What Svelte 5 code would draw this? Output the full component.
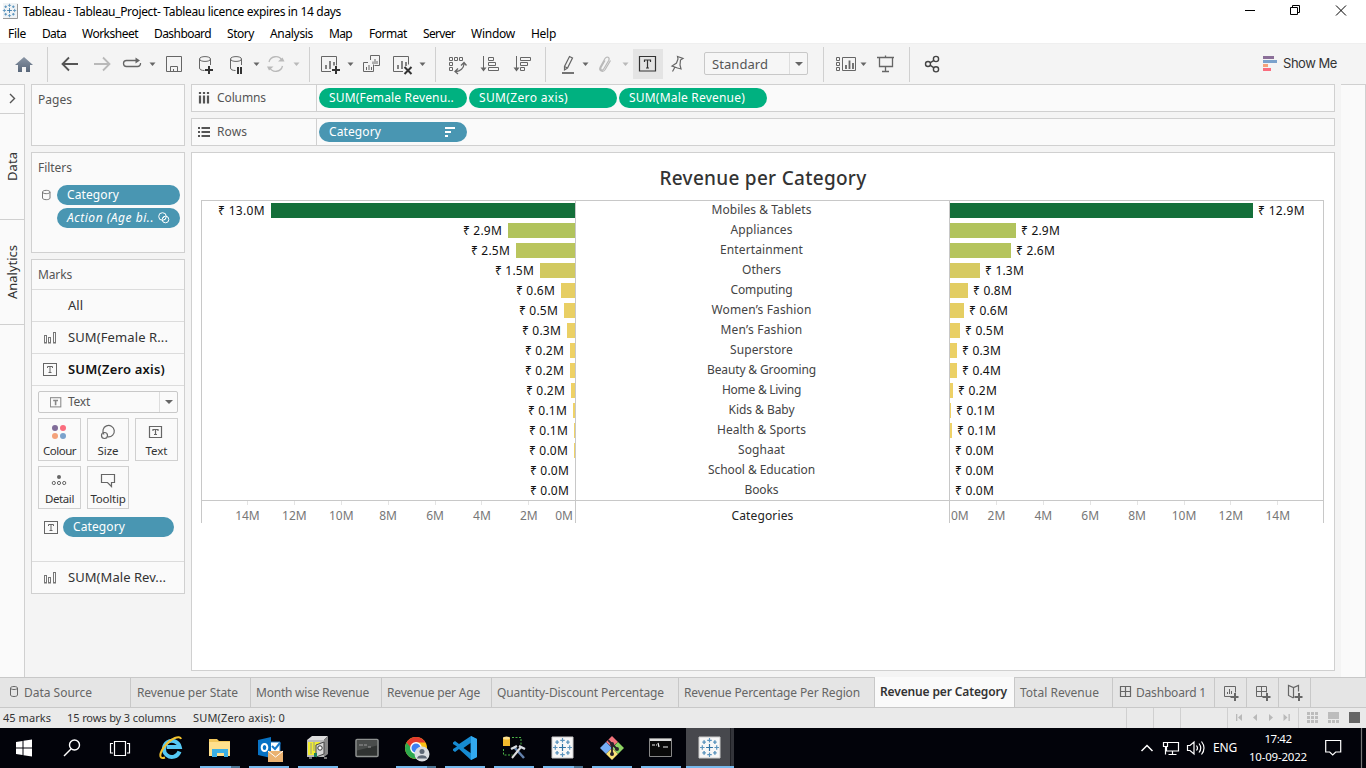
<script>
  // Spreads or tightens letter spacing so a label takes the given length.
  function fit(node, length) {
    if (!length) return;
    const box = node.getBoundingClientRect();
    const natural = Math.max(box.width, box.height > 20 && node.closest('.side') ? box.height : 0);
    const spacing = (length - natural) / node.textContent.length;
    node.style.letterSpacing = spacing.toFixed(3) + 'px';
  }

  const menus = [
    ['File', 18], ['Data', 24], ['Worksheet', 56], ['Dashboard', 57], ['Story', 27],
    ['Analysis', 43], ['Map', 23], ['Format', 38], ['Server', 32], ['Window', 44], ['Help', 25]
  ];
  const menuGaps = [0, 16, 16, 16, 16, 16, 16, 17, 16, 16, 16];

  const rows = [
    ['Mobiles & Tablets', 304, '₹ 13.0M', 303, '₹ 12.9M', '#146f3a', '#146f3a', 100],
    ['Appliances', 67, '₹ 2.9M', 66, '₹ 2.9M', '#b1c35c', '#b1c35c', 62],
    ['Entertainment', 59, '₹ 2.5M', 61, '₹ 2.6M', '#bac55d', '#b5c45d', 83],
    ['Others', 35, '₹ 1.5M', 30, '₹ 1.3M', '#d1c960', '#d6ca61', 39],
    ['Computing', 14, '₹ 0.6M', 18, '₹ 0.8M', '#e6ce63', '#e2cd62', 62],
    ['Women’s Fashion', 11, '₹ 0.5M', 14, '₹ 0.6M', '#e9cf64', '#e5ce63', 100],
    ['Men’s Fashion', 8, '₹ 0.3M', 10, '₹ 0.5M', '#ebd065', '#e9cf64', 82],
    ['Superstore', 5, '₹ 0.2M', 7, '₹ 0.3M', '#eed166', '#ebd065', 63],
    ['Beauty & Grooming', 5, '₹ 0.2M', 7, '₹ 0.4M', '#eed166', '#ebd065', 109],
    ['Home & Living', 4, '₹ 0.2M', 3, '₹ 0.2M', '#eed166', '#eed166', 79],
    ['Kids & Baby', 2, '₹ 0.1M', 1, '₹ 0.1M', '#efd267', '#efd267', 66],
    ['Health & Sports', 1, '₹ 0.1M', 2, '₹ 0.1M', '#efd267', '#efd267', 89],
    ['Soghaat', 1, '₹ 0.0M', 0, '₹ 0.0M', '#efd267', '#efd267', 47],
    ['School & Education', 0, '₹ 0.0M', 0, '₹ 0.0M', '#efd267', '#efd267', 107],
    ['Books', 0, '₹ 0.0M', 0, '₹ 0.0M', '#efd267', '#efd267', 34]
  ];
  const ticks = [14, 12, 10, 8, 6, 4, 2];

  const tabs = [
    ['Revenue per State', 120, 101], ['Month wise Revenue', 131, 113], ['Revenue per Age', 110, 93],
    ['Quantity-Discount Percentage', 187, 167], ['Revenue Percentage Per Region', 196, 176],
    ['Revenue per Category', 140, 127], ['Total Revenue', 98, 79]
  ];
</script>

{#snippet caret(x, y = 64, c = '#666')}
  <path d="M{x - 3} {y - 1.5}h6l-3 3.5z" fill={c} stroke="none" />
{/snippet}

{#snippet plus(x, y)}
  <path d="M{x - 4} {y}h8M{x} {y - 4}v8" stroke="#333" stroke-width="2" />
{/snippet}

{#snippet cylinder(x, y)}
  <path d="M{x} {y + 2.5}v9c0 1.6 2 2.5 5 2.5M{x + 11} {y + 2.5}v6M{x} {y + 2.5}c0-3.2 11-3.2 11 0s-11 3.2-11 0" />
{/snippet}

{#snippet tableau(x, y, s)}
  <g transform="translate({x} {y}) scale({s})" fill="none" stroke-width="1.3">
    <path d="M-3.8 0h7.6M0-3.8v7.6" stroke="#2f73a4" />
    <path d="M0-10.5v5M-2.5-8h5M0 10.5v-5M-2.5 8h5M-10.5 0h5M-8-2.5v5M10.5 0h-5M8-2.5v5" stroke="#5b94bd" />
    <path d="M-6-8v4M-8-6h4M6-8v4M4-6h4M-6 8v-4M-8 6h4M6 8v-4M4 6h4" stroke="#5b94bd" stroke-width="1.6" />
  </g>
{/snippet}

{#snippet textMark(c = '#666')}
  <svg width="15" height="13" viewBox="0 0 15 13" fill="none" stroke={c}>
    <rect x=".5" y=".5" width="13" height="12" />
    <path d="M4.5 5V3.5h5V5M7 3.5v6M5.5 9.5h3" />
  </svg>
{/snippet}

{#snippet barsMark()}
  <svg width="15" height="13" viewBox="0 0 15 13" fill="none" stroke="#777">
    <rect x="1.5" y="4.5" width="2" height="7.5" /><rect x="5.5" y="6.5" width="2" height="5.5" /><rect x="10.5" y="1.5" width="2" height="10.5" />
  </svg>
{/snippet}

<div class="window">
  <header class="titlebar">
    <svg width="20" height="24" viewBox="0 0 20 24"><path d="M3 3h15v15.5H3z" fill="#f0f3f5" /><path d="M17.5 4v14.5H3" fill="none" stroke="#999" />{@render tableau(9.5, 10.5, .64)}</svg>
    <span class="t" use:fit={318}>Tableau - Tableau_Project- Tableau licence expires in 14 days</span>
    <svg class="controls" width="131" height="24" viewBox="1235 0 131 24" fill="none" stroke="#000">
      <path d="M1245 10.5h10M1290.5 7.5h7v7h-7zM1292.5 7.5v-2h7v7h-2M1336 5.5l10 10M1346 5.5l-10 10" />
    </svg>
  </header>

  <nav class="menu">
    {#each menus as [label, w], i}
      <span style="margin-left:{menuGaps[i]}px;width:{w}px"><i class="t" use:fit={w}>{label}</i></span>
    {/each}
  </nav>

  <div class="toolbar">
    <svg width="47" viewBox="0 43 47 41">
      <defs><linearGradient id="roof" x2="0" y2="1"><stop stop-color="#8995a5" /><stop offset="1" stop-color="#59677a" /></linearGradient></defs>
      <path d="M24 57l9 8h-3v7h-4v-5h-4v5h-4v-7h-3z" fill="url(#roof)" stroke="none" />
    </svg>
    <b></b>
    <svg width="36" viewBox="48 43 36 41"><path d="M62.500 64h15.500M69 57.500l-6.500 6.500 6.500 6.500" stroke-width="1.800" stroke="#555" /></svg>
    <svg width="32" viewBox="84 43 32 41"><path d="M94 64h15.500M103 57.500l6.500 6.500-6.500 6.500" stroke-width="1.800" stroke="#b9b9b9" /></svg>
    <svg width="42" viewBox="116 43 42 41"><path d="M137.500 60.500h-11a3 3 0 0 0 0 6h11a3 3 0 0 0 3-3.500" stroke-width="1.300" /><path d="M135.500 57.500l4.500 3-4.500 3z" fill="#666" stroke="none" />{@render caret(152.500)}</svg>
    <svg width="30" viewBox="158 43 30 41"><path d="M166.500 56.500h15v15h-15zM170.500 71v-4.500h7v4.500M173.500 69v2" /></svg>
    <svg width="34" viewBox="188 43 34 41">{@render cylinder(199.500, 56.500)}{@render plus(209, 70)}</svg>
    <svg width="42" viewBox="222 43 42 41">{@render cylinder(230.500, 56.500)}<path d="M238 67v7M241 67v7" stroke="#333" stroke-width="2" />{@render caret(256.500)}</svg>
    <svg width="45" viewBox="264 43 45 41"><g stroke="#b9b9b9"><path d="M269 62a7 7 0 0 1 13-1.500M282.500 66a7 7 0 0 1-13 1.500" stroke-width="1.300" /><path d="M278 61.500h6.500l-2-4zM267 66.500h6.500l-4.500 4z" fill="#b9b9b9" stroke="none" /></g>{@render caret(296.500, 64, '#b9b9b9')}</svg>
    <b></b>
    <svg width="46" viewBox="310 43 46 41"><path d="M331 71.500h-9.500v-15h15v9" /><path d="M326 69v-4M330 69v-8M334 65.500v-3.500" stroke-width="1.600" />{@render plus(336, 70)}{@render caret(350.500)}</svg>
    <svg width="31" viewBox="356 43 31 41"><path d="M370.500 60v-4.500h9v10h-5M368 62.500h-4.500v9h10v-7M366.500 70v-3M369 70v-5M371.500 70v-3M373 64v-2.500M375 64v-5M377 64v-3" /></svg>
    <svg width="48" viewBox="387 43 48 41"><path d="M403 71.500h-9.500v-15h15v8" /><path d="M398 69v-4M402 69v-8M406 66v-4" stroke-width="1.600" /><path d="M404.500 67l7 7M411.500 67l-7 7" stroke="#333" stroke-width="2" />{@render caret(422.500)}</svg>
    <b></b>
    <svg width="36" viewBox="436 43 36 41"><path d="M449.500 57.500h3v3h-3zM454.500 57.500h3v3h-3zM459.500 57.500h3v3h-3zM449.500 62.500h3v3h-3zM449.500 67.500h3v3h-3z" /><path d="M464 64a8 8 0 0 1-8 7.500M458 68.500l-3 3 3 2.500M461 65.500l3-3 2.500 3" stroke-width="1.300" /></svg>
    <svg width="32" viewBox="472 43 32 41"><path d="M483.500 56v14M488.500 57.500h5v3h-5zM488.500 62.500h7v3h-7zM488.500 67.500h10v3h-10z" /><path d="M480.500 67.500h6l-3 4z" fill="#666" stroke="none" /></svg>
    <svg width="41" viewBox="504 43 41 41"><path d="M516.500 56v14M520.500 57.500h10v3h-10zM520.500 62.500h7v3h-7zM520.500 67.500h4v3h-4z" /><path d="M513.500 67.500h6l-3 4z" fill="#666" stroke="none" /></svg>
    <b></b>
    <svg width="46" viewBox="546 43 46 41"><path d="M562 73h12" stroke-width="1.800" /><path d="M564.500 70v-3.500l5-10 3 1.500-5 10zM564.500 66.500l3 1.500" stroke-width="1.200" />{@render caret(585.500)}</svg>
    <svg width="41" viewBox="592 43 41 41"><path d="M605 60.500l-4 7c-1 2.500 1.500 3.500 2.700 1.500l5-8.500c1.500-3-1.800-4.800-3.700-2l-4.800 8.500c-1.800 3.800 2.800 6 5 2.500l5.300-9" stroke="#b9b9b9" stroke-width="1.200" />{@render caret(625.500, 64, '#b9b9b9')}</svg>
    <svg width="30" viewBox="633 43 30 41"><path d="M633 49h30v30h-30z" fill="#e4e4e4" stroke="none" /><path d="M639.500 56.500h16v14.500h-16zM644.500 62v-2h6v2M647.500 60v8M646 68h3" stroke="#333" stroke-width="1.200" /></svg>
    <svg width="41" viewBox="663 43 41 41"><path d="M677.500 56.500l5.500 2-2.500 1.500-.5 5 1 4-3.500-1-5.500-2 4.500-3 1.500-4zM675 67l-2.500 4.500" stroke-width="1.200" /></svg>
    <div class="select big"><span><i class="t" use:fit={56}>Standard</i></span><em></em></div>
    <div class="pad"></div>
    <b></b>
    <svg width="47" viewBox="824 43 47 41"><path d="M836.500 57.500h3v3h-3zM836.500 62.500h3v3h-3zM836.500 67.500h3v3h-3zM842.500 57.500h13v13h-13z" /><path d="M846 69v-4M849.500 69v-8.500M853 69v-6" stroke-width="1.800" />{@render caret(863.500)}</svg>
    <svg width="38" viewBox="871 43 38 41"><path d="M877 57.500h17M879.500 58v8.500h13V58M885.500 55.500v2M885.500 67v4M882 71.500h7" stroke-width="1.300" /></svg>
    <b></b>
    <svg width="40" viewBox="910 43 40 41"><g stroke="#444" stroke-width="1.400"><circle cx="928" cy="64" r="2.500" /><circle cx="936" cy="59" r="2.600" /><circle cx="936" cy="69.300" r="2.600" /><path d="M930 62.800l4-2.400M930 65.200l4 2.600" /></g></svg>
    <div class="showme">
      <svg width="20" height="41" viewBox="1263 43 20 41" stroke="none"><path d="M1263 56h11v3h-11z" fill="#8b6f98" /><path d="M1263 60h14v3h-14z" fill="#7ba2cc" /><path d="M1263 64h5v3h-5z" fill="#f4a27a" /><path d="M1263 68h8v3h-8z" fill="#fa6d7e" /></svg>
      <i class="t" use:fit={54}>Show Me</i>
    </div>
  </div>

  <main>
    <aside class="rail">
      <div class="chev"><svg width="24" height="28" viewBox="0 0 24 28" fill="none" stroke="#555" stroke-width="1.400"><path d="M10 9l4.500 4.500L10 18" /></svg></div>
      <div class="side"><span class="t" use:fit={29}>Data</span></div>
      <div class="side ana"><span class="t" use:fit={54}>Analytics</span></div>
    </aside>

    <section class="cards">
      <div class="card pages"><h3><i class="t" use:fit={34}>Pages</i></h3></div>
      <div class="card filters">
        <h3><i class="t" use:fit={34}>Filters</i></h3>
        <div class="filter">
          <svg width="25" height="20" viewBox="0 0 25 20" fill="none" stroke="#777"><path d="M10.500 7v6c0 2.200 7.500 2.200 7.500 0V7c0-2.200-7.500-2.200-7.500 0s7.500 2.200 7.500 0" /></svg>
          <div class="pill dim"><i class="t" use:fit={52}>Category</i></div>
        </div>
        <div class="filter">
          <svg width="25" height="20"></svg>
          <div class="pill dim"><em class="t" use:fit={87}>Action (Age bi..</em>
            <svg width="14" height="14" viewBox="0 0 14 14" fill="none" stroke="#fff"><circle cx="5.500" cy="5.500" r="3.800" /><circle cx="8.500" cy="8.500" r="3.300" /><path d="M5 8l3-3M7 9l2-2" /></svg>
          </div>
        </div>
      </div>

      <div class="card marks">
        <h3><i class="t" use:fit={34}>Marks</i></h3>
        <div class="mark"><span></span><i class="t" use:fit={15}>All</i></div>
        <div class="mark"><span>{@render barsMark()}</span><i class="t" use:fit={100}>SUM(Female R...</i></div>
        <div class="mark on"><span>{@render textMark()}</span><i class="t" use:fit={97}>SUM(Zero axis)</i></div>
        <div class="editor">
          <div class="select small"><span><svg width="12" height="11" viewBox="0 0 15 13" fill="none" stroke="#888"><rect x=".5" y=".5" width="13" height="11.500" stroke-width="1.300" /><path d="M4 4h6M7 4v6" stroke-width="2" /></svg><i class="t" use:fit={22}>Text</i></span><em></em></div>
          <div class="shelf">
            <div class="btn"><svg width="42" height="24" viewBox="39 419 42 24"><circle cx="55" cy="428" r="3" fill="#806c99" /><circle cx="63" cy="428" r="3" fill="#fa6d7e" /><circle cx="55" cy="436" r="3" fill="#f4a27a" /><circle cx="63" cy="436" r="3" fill="#7ba2cc" /></svg><i class="t" use:fit={33}>Colour</i></div>
            <div class="btn"><svg width="40" height="24" viewBox="88 419 40 24" fill="none" stroke="#666" stroke-width="1.200"><path d="M104 434.500a5.700 5.700 0 1 1 4 2.300" /><circle cx="104.500" cy="435.500" r="3" /></svg><i class="t" use:fit={21}>Size</i></div>
            <div class="btn"><svg width="42" height="24" viewBox="136 419 42 24" fill="none" stroke="#666"><path d="M149.500 426.500h12v11h-12zM153 431v-1.500h5v1.500M155.500 429.500v5M154 434.500h3" stroke-width="1.200" /></svg><i class="t" use:fit={22}>Text</i></div>
            <div class="btn"><svg width="42" height="24" viewBox="39 467 42 24" fill="none" stroke="#666"><circle cx="59" cy="477" r="2" fill="#666" stroke="none" /><circle cx="53.800" cy="483" r="1.600" /><circle cx="59" cy="483" r="1.600" /><circle cx="64.200" cy="483" r="1.600" /></svg><i class="t" use:fit={29}>Detail</i></div>
            <div class="btn"><svg width="40" height="24" viewBox="88 467 40 24" fill="none" stroke="#666" stroke-width="1.200"><path d="M101.500 474.500h13v8h-3v4l-4-4h-6v-8z" /></svg><i class="t" use:fit={35}>Tooltip</i></div>
          </div>
          <div class="encoded">{@render textMark()}<div class="pill dim"><i class="t" use:fit={52}>Category</i></div></div>
        </div>
        <div class="mark last"><span>{@render barsMark()}</span><i class="t" use:fit={98}>SUM(Male Rev...</i></div>
      </div>
    </section>

    <section class="sheet">
      <div class="track">
        <div class="name"><svg width="25" height="24" viewBox="0 0 25 24" fill="none" stroke="#555" stroke-width="2.200"><path d="M8 6v2M8 9.500v8M12 6v2M12 9.500v8M16 6v2M16 9.500v8" /></svg><i class="t" use:fit={49}>Columns</i></div>
        <div class="pill mea"><i class="t" use:fit={125}>SUM(Female Revenu..</i></div>
        <div class="pill mea"><i class="t" use:fit={89}>SUM(Zero axis)</i></div>
        <div class="pill mea"><i class="t" use:fit={116}>SUM(Male Revenue)</i></div>
      </div>
      <div class="track">
        <div class="name"><svg width="25" height="24" viewBox="0 0 25 24" fill="none" stroke="#555" stroke-width="2"><path d="M6 8h2M9.500 8h8.500M6 12h2M9.500 12h8.500M6 16h2M9.500 16h8.500" /></svg><i class="t" use:fit={30}>Rows</i></div>
        <div class="pill dim wide"><i class="t" use:fit={52}>Category</i><svg width="12" height="12" viewBox="0 0 12 12" stroke="#fff" stroke-width="1.800"><path d="M1 2h10M1 6h6M1 10h3" /></svg></div>
      </div>

      <article class="view">
        <h1><span class="t" use:fit={207}>Revenue per Category</span></h1>
        <div class="chart">
          <div class="col left">
            {#each rows as r}
              <div class="row"><span class="label t" use:fit={r[2].length > 6 ? 47 : 39}>{r[2]}</span><div class="bar" style="width:{r[1]}px;background:{r[5]}"></div></div>
            {/each}
          </div>
          <div class="col mid">
            {#each rows as r}<div class="row"><span class="t" use:fit={r[7]}>{r[0]}</span></div>{/each}
          </div>
          <div class="col right">
            {#each rows as r}
              <div class="row"><div class="bar" style="width:{r[3]}px;background:{r[6]}"></div><span class="label t" use:fit={r[4].length > 6 ? 47 : 39}>{r[4]}</span></div>
            {/each}
          </div>
        </div>
        <div class="axes">
          <div class="axis l">{#each ticks as t}<span class="tick">{t}M</span>{/each}<span class="zero">0M</span></div>
          <div class="axis m"><span class="t" use:fit={62}>Categories</span></div>
          <div class="axis r"><span class="zero">0M</span>{#each [...ticks].reverse() as t}<span class="tick">{t}M</span>{/each}</div>
        </div>
      </article>
    </section>
    <aside class="dock"></aside>
  </main>

  <div class="tabs">
    <div class="tab" style="width:131px"><svg width="24" height="29" viewBox="0 0 24 29" fill="none" stroke="#666"><path d="M10.500 10v7c0 2 7 2 7 0v-7c0-2-7-2-7 0s7 2 7 0" /></svg><i class="t" use:fit={68}>Data Source</i></div>
    {#each tabs as [label, w, tw], i}
      <div class="tab sheettab" class:first={i === 0} class:active={label === 'Revenue per Category'} style="width:{w}px"><i class="t" use:fit={tw}>{label}</i></div>
    {/each}
    <div class="tab" style="width:102px"><svg width="23" height="29" viewBox="1113 678 23 29" fill="none" stroke="#666" stroke-width="1.200"><path d="M1120.500 686.500h10v10h-10zM1125.500 686.500v10M1120.500 691.500h10" /></svg><i class="t" use:fit={70}>Dashboard 1</i></div>
    <div class="tab" style="width:32px"><svg width="31" height="29" viewBox="1215 678 31 29" fill="none" stroke="#666"><path d="M1231 696.500h-6.500v-10h11v6M1227.500 694v-2M1229.500 694v-5M1231.500 694v-3" /><path d="M1230.500 697h8M1235 693v8" stroke-width="2" /></svg></div>
    <div class="tab" style="width:32px"><svg width="31" height="29" viewBox="1247 678 31 29" fill="none" stroke="#666"><path d="M1264 696.500h-7.500v-10h10v6M1261.500 686.500v10M1256.500 691.500h10" /><path d="M1262.500 697h8M1267 693v8" stroke-width="2" /></svg></div>
    <div class="tab" style="width:32px"><svg width="31" height="29" viewBox="1279 678 31 29" fill="none" stroke="#666"><path d="M1293.500 698l-5-2.500v-10l5 2 5-2v6M1293.500 688v10" stroke-width="1.200" /><path d="M1294.500 697h8M1299 693v8" stroke-width="2" /></svg></div>
  </div>

  <div class="status">
    <span class="t" use:fit={48}>45 marks</span><span class="t two" use:fit={109}>15 rows by 3 columns</span><span class="t three" use:fit={92}>SUM(Zero axis): 0</span>
    <div class="cells"><p></p><p></p><p></p>
      <p class="nav"><svg width="70" height="20" viewBox="1228 708 70 20"><path d="M1236 714h1.300v7h-1.300zM1242 714v7l-4-3.500zM1257 714v7l-4-3.500zM1269 714v7l4-3.500zM1283.500 714v7l4-3.500zM1288.500 714h1.300v7h-1.300z" fill="#b9b9b9" /></svg></p>
      <svg width="67" height="20" viewBox="1299 708 67 20" fill="#bcbcbc"><path d="M1307 712h3v3h-3zM1311 712h3v3h-3zM1315 712h3v3h-3zM1307 716h3v3h-3zM1311 716h3v3h-3zM1315 716h3v3h-3zM1307 720h3v3h-3zM1311 720h3v3h-3zM1315 720h3v3h-3zM1328 712h11v7h-11zM1328 720h3v3h-3zM1332 720h3v3h-3zM1336 720h3v3h-3z" /><path d="M1349 712h11v11h-11z" fill="#666" /></svg>
    </div>
  </div>

  <footer>
    <svg width="48" viewBox="0 728 48 40"><path d="M16 742l6.500-1v6.500H16zM23.500 740.800l8.500-1.200v7.900h-8.500zM16 748.500h6.500v6.500l-6.500-1zM23.500 748.500h8.500v8l-8.500-1.200z" fill="#fff" /></svg>
    <svg width="48" viewBox="48 728 48 40" fill="none" stroke="#fff" stroke-width="1.400"><circle cx="74.500" cy="745" r="5" /><path d="M71 749l-7 7" /></svg>
    <svg width="51" viewBox="96 728 51 40" fill="none" stroke="#fff" stroke-width="1.200"><path d="M114.500 741.500h11v14h-11zM113 743.500h-2.500v9.500h2.500M127 743.500h2.500v9.500H127" /></svg>
    <svg width="49" viewBox="147 728 49 40" fill="none"><path d="M179.500 751.500a8 8 0 1 1 .2-4.500h-13" stroke="#55c9f5" stroke-width="4" /><path d="M165 757.500c-7 2.500-5.500-5 0-11.500 6-8 15-11 16-7" stroke="#f3c32f" stroke-width="2" /></svg>
    <svg width="49" viewBox="196 728 49 40"><path d="M209 739h8l2 2h11v15h-21z" fill="#f2c75c" /><path d="M209 742h21v14h-21z" fill="#ffe08d" /><path d="M212 757v-8h16v8h-4v-4h-7v4z" fill="#3bb0e5" /><path d="M200 766h31v2h-31z" fill="#76b9ed" /><path d="M231 766h9v2h-9z" fill="#4c7594" /></svg>
    <svg width="49" viewBox="245 728 49 40"><path d="M270 742h10v10h-10z" fill="#fff" stroke="#1679c8" /><path d="M272 746l3 3 5-6" fill="none" stroke="#1679c8" stroke-width="2" /><path d="M258 740l13-3v21l-13-3z" fill="#0872c4" /><ellipse cx="264.500" cy="747.500" rx="2.800" ry="3.600" fill="none" stroke="#fff" stroke-width="2" /><path d="M268 751h15v11h-15z" fill="#eab271" /><path d="M268 751l7.500 6 7.500-6" fill="none" stroke="#fff" /><path d="M249 766h40v2h-40z" fill="#76b9ed" /></svg>
    <svg width="49" viewBox="294 728 49 40"><path d="M307 740l5-4h16l-4 4z" fill="#ddd" /><path d="M307 740h17v17h-17z" fill="#bbb" /><path d="M308 742h12v13h-12z" fill="#f1ed2e" /><path d="M324 740l4-4v18l-4 3z" fill="#888" /><path d="M311 743v11M314 742v9" stroke="#998" /><path d="M316 745l8-3v12l-8 3z" fill="#d6d6d6" stroke="#444" /><circle cx="320" cy="748" r="2.200" fill="#fff" stroke="#333" /><path d="M314 753h3v4h-3z" fill="#1d7f5a" /><path d="M309 758h3M324 758h3" stroke="#777" stroke-width="2" /><path d="M298 766h40v2h-40z" fill="#76b9ed" /></svg>
    <svg width="49" viewBox="343 728 49 40"><rect x="356" y="739.500" width="22" height="17" rx="1" fill="#303332" stroke="#8f9291" stroke-width="1.500" /><path d="M357 740.500h20v5l-20 5z" fill="#4a4d4c" /><path d="M359 745h4M364 745h3M368 747h3" stroke="#999" /></svg>
    <svg width="49" viewBox="392 728 49 40"><circle cx="416" cy="748" r="11" fill="#fbc116" /><path d="M416 742.500h9.500a11 11 0 0 0-19 0l5 8z" fill="#e33b2e" /><path d="M406.500 742.500A11 11 0 0 0 416 759l5-8.500-5 3z" fill="#2da94f" /><circle cx="416" cy="748" r="5.200" fill="#3d7ff0" stroke="#fff" stroke-width="1.400" /><circle cx="422" cy="754" r="7.500" fill="#dadde1" /><circle cx="422" cy="751.500" r="2.500" fill="#5d6775" /><path d="M417 758.500c0-4.500 10-4.500 10 0z" fill="#5d6775" /><path d="M396 766h31v2h-31z" fill="#76b9ed" /><path d="M427 766h9v2h-9z" fill="#4c7594" /></svg>
    <svg width="49" viewBox="441 728 49 40"><path d="M471 736l6 3v18l-6 3-12-11-4 3-2-1.500v-1.500l4-2.500-4-2.500v-1.500l2-1.500 4 3zM470.500 743l-7 5 7 5z" fill="#168bd2" fill-rule="evenodd" /><path d="M471 736l6 3v18l-6 3z" fill="#32a9ef" /><path d="M445 766h40v2h-40z" fill="#76b9ed" /></svg>
    <svg width="49" viewBox="490 728 49 40" fill="none"><path d="M503 738h7v8h-7z" fill="#f2b92c" /><ellipse cx="506.500" cy="738" rx="3.500" ry="1.500" fill="#ffe28e" /><path d="M512 737.500h9v8M503.500 749v6h9" stroke="#4bb646" stroke-dasharray="2 1.500" /><path d="M514 747l10 11" stroke="#6482ad" stroke-width="2.500" /><path d="M521 747l-9 11" stroke="#ddd" stroke-width="2" /><path d="M511 749l6-3M519 746l6 3" stroke="#d7dbe1" stroke-width="2.500" /><path d="M494 766h40v2h-40z" fill="#76b9ed" /></svg>
    <svg width="49" viewBox="539 728 49 40"><path d="M552 737h21v21h-21z" fill="#f7f7f7" stroke="#ccc" />{@render tableau(562.500, 747.500, .9)}<path d="M543 766h31v2h-31z" fill="#76b9ed" /><path d="M574 766h9v2h-9z" fill="#4c7594" /></svg>
    <svg width="49" viewBox="588 728 49 40"><path d="M612 736l6 6-6 5-6-5z" fill="#f1737b" /><path d="M606 742l6 6-6 6-6-6z" fill="#75adf4" /><path d="M618 742l6 6-6 6-6-6z" fill="#8ed463" /><path d="M612 748l6 6-6 6-6-6z" fill="#fae276" /><path d="M608 740l4 4v11M612 744l5 5" fill="none" stroke="#29212b" stroke-width="1.800" /><circle cx="612" cy="744" r="2" fill="#29212b" /><circle cx="617" cy="749" r="2" fill="#29212b" /><circle cx="612" cy="754" r="2" fill="#29212b" /><path d="M592 766h40v2h-40z" fill="#76b9ed" /></svg>
    <svg width="49" viewBox="637 728 49 40"><path d="M649.500 738.500h22v18h-22z" fill="#090909" stroke="#888" /><path d="M650 739h21v2h-21z" fill="#ddd" /><path d="M652 745h3M656 745h1M658 743l1 4M663 747h5" stroke="#eee" stroke-width="1.200" /><path d="M641 766h40v2h-40z" fill="#76b9ed" /></svg>
    <svg width="48" viewBox="686 728 48 40"><path d="M686 728h48v40h-48z" fill="#47484d" /><path d="M730 728h1v40h-1z" fill="#1e1f24" /><path d="M731 728h3v40h-3z" fill="#33343a" /><path d="M699 737h21v21h-21z" fill="#f7f7f7" stroke="#ccc" />{@render tableau(709.500, 747.500, .9)}<path d="M686 766h48v2h-48z" fill="#76b9ed" /></svg>
    <div class="tray">
      <svg width="73" viewBox="1140 728 73 40" fill="none" stroke="#fff" stroke-width="1.200"><path d="M1141.500 751l5.500-5.500 5.500 5.500" stroke-width="1.500" /><path d="M1168 742.500h10.500v8.500h-12v-5M1172.500 751v3.500M1168.500 754.500h8M1163.500 742.500h4v4h-4zM1165.500 746.500v8" /><path d="M1187.500 745.500h2.500l4-3.500v12l-4-3.500h-2.500zM1196.500 745.500q2 2.500 0 5M1199 743.500q3.500 4.500 0 9M1201.500 741.500q5 6.500 0 13" /></svg>
      <span class="lang t" use:fit={24}>ENG</span>
      <div class="clock"><span><i class="t" use:fit={27}>17:42</i></span><span><i class="t" use:fit={58}>10-09-2022</i></span></div>
      <svg width="41" viewBox="1325 728 41 40" fill="none" stroke="#fff" stroke-width="1.200"><path d="M1325.700 740.500h15v11.500h-5l-3 3-3-3h-4z" /><path d="M1361.500 728v40" stroke="#777" /></svg>
    </div>
  </footer>
</div>

<style>
  :global(body) { margin: 0; overflow: hidden; }
  * { box-sizing: border-box; }
  .window { width: 1366px; height: 768px; display: flex; flex-direction: column; background: #f4f4f4; font: 12px/16px "Noto Sans", sans-serif; color: #333; }
  svg { display: block; flex: none; }
  i { font-style: normal; }
  .t { display: inline-block; white-space: nowrap; flex: none; }

  .titlebar { height: 24px; background: #fff; display: flex; color: #000; line-height: 24px; }
  .titlebar span { margin-left: 3px; }
  .controls { margin-left: auto; }
  .menu { height: 19px; background: #fff; display: flex; padding-left: 8px; color: #000; line-height: 19px; }
  .menu span { flex: none; }

  .toolbar { height: 41px; display: flex; border-top: 1px solid #efefef; flex: none; }
  .toolbar > svg { height: 41px; margin-top: -1px; fill: none; stroke: #666; }
  .toolbar > b { width: 1px; height: 35px; margin-top: 3px; background: #d0d0d0; }
  .select { display: flex; border: 1px solid #c8c8c8; border-radius: 2px; background: #fafafa; }
  .select span { flex: 1; display: flex; align-items: center; }
  .select em { width: 18px; border-left: 1px solid #ddd; display: grid; place-items: center; }
  .select em::after { content: ""; border: 4px solid transparent; border-top-color: #666; border-bottom: 0; }
  .big { width: 104px; height: 23px; margin-top: 8px; font: 13px "Noto Sans", sans-serif; padding-left: 7px; color: #555; background: #f6f6f6; }
  .pad { width: 15px; }
  .showme { margin-left: auto; margin-right: 29px; display: flex; font: 400 13px/39px Inter, sans-serif; color: #333; }
  .showme svg { margin-top: -1px; }

  main { height: 593px; display: flex; flex: none; }
  .rail { width: 25px; flex: none; background: #fafafa; border: solid #d0d0d0; border-width: 1px 1px 0 0; }
  .chev { height: 28px; }
  .side { width: 24px; height: 106px; border-bottom: 1px solid #d0d0d0; border-bottom: 0; box-shadow: 0 -1px #d0d0d0 inset; writing-mode: vertical-rl; transform: rotate(180deg); display: flex; align-items: center; justify-content: center; font: 13px/24px "Noto Sans", sans-serif; color: #333; border-bottom: 1px solid #d0d0d0; box-shadow: none; }
  .ana { border-top: 1px solid #d0d0d0; }

  .cards { width: 154px; flex: none; margin: 0 6px; display: flex; flex-direction: column; gap: 6px; }
  .card { border: 1px solid #d0d0d0; background: #fafafa; flex: none; }
  .card h3 { font: 400 12px/30px "Noto Sans", sans-serif; color: #555; margin: 0 0 0 6px; height: 29px; }
  .pages { height: 62px; }
  .filters { height: 101px; }
  .filters h3 { height: 32px; }
  .filter { display: flex; height: 23px; }
  .pill { height: 20px; border-radius: 10px; color: #fff; font: 12px/19px "Noto Sans", sans-serif; display: flex; padding-left: 10px; width: 123px; flex: none; }
  .dim { background: #4996b2; }
  .mea { background: #00b180; width: 148px; }
  .wide { width: 148px; }
  .wide svg { margin: 4px 0 0 63px; }
  .filter .pill svg { margin: 3px 0 0 3px; }
  .marks { height: 335px; }
  .mark { height: 32px; border-top: 1px solid #dcdcdc; display: flex; align-items: center; padding-bottom: 2px; font: 13px/16px "Noto Sans", sans-serif; color: #333; }
  .mark span { width: 25px; margin: 1px 0 0 11px; }
  .mark.on { font-weight: 600; color: #111; }
  .editor { border-top: 1px solid #dcdcdc; height: 176px; padding: 5px 0 0 6px; }
  .small { width: 140px; height: 22px; color: #555; }
  .small svg { margin: 0 6px 0 11px; }
  .shelf { display: grid; grid-template-columns: 43px 42px 43px; gap: 5px 6px; grid-auto-rows: 43px; margin-top: 5px; }
  .btn { border: 1px solid #d0d0d0; display: flex; flex-direction: column; align-items: center; font-size: 11.500px; line-height: 16px; }
  .encoded { display: flex; margin: 8px 0 0 6px; align-items: center; height: 20px; }
  .encoded .pill { width: 111px; margin-left: 4px; }

  .sheet { width: 1144px; flex: none; display: flex; flex-direction: column; gap: 6px; }
  .track { height: 28px; border: 1px solid #d0d0d0; background: #fafafa; display: flex; gap: 2px; padding-top: 3px; flex: none; }
  .name { width: 125px; margin-top: -3px; border-right: 1px solid #d0d0d0; display: flex; line-height: 26px; color: #555; font-size: 12px; }
  .name svg { margin-top: 1px; }
  .view { height: 519px; border: 1px solid #d0d0d0; background: #fff; padding: 0 9px; }
  h1 { margin: 0; height: 47px; font: 500 19px/51px "Noto Sans", sans-serif; text-align: center; color: #333; }
  .chart { height: 301px; width: 1123px; border: solid #c8c8c8; border-width: 1px 0 1px 1px; display: grid; grid-template-columns: repeat(3, 374px); }
  .col { border-right: 1px solid #c8c8c8; }
  .row { height: 20px; display: flex; align-items: flex-start; line-height: 18px; }
  .bar { height: 15px; margin-top: 2px; flex: none; }
  .left .row { justify-content: flex-end; }
  .label { color: #111; }
  .left .label { margin-right: 6px; line-height: 19px; }
  .right .label { margin-left: 5px; line-height: 19px; }
  .mid .row { justify-content: center; color: #444; padding-right: 2px; }
  .axes { display: grid; grid-template: 22px / repeat(3, 374px); border-left: 1px solid #c8c8c8; width: 1123px; }
  .axis { height: 22px; border-right: 1px solid #c8c8c8; display: flex; line-height: 30px; color: #777; }
  .axis.m { justify-content: center; color: #222; }
  .tick { width: 46.900px; height: 30px; text-align: center; flex: none; background: linear-gradient(#e4e4e4, #e4e4e4) center top / 1px 4px no-repeat; }
  .axis.l { padding-left: 22px; }
  .axis.l .zero { margin-left: 3px; width: 20px; }
  .axis.r .zero { width: 22px; margin-left: 1px; }

  .dock { width: 25px; flex: none; margin-left: 6px; background: #fafafa; border: solid #d0d0d0; border-width: 1px 1px 0 0; }

  .tabs { height: 31px; border: solid #c8c8c8; border-width: 1px 0; background: #e5e5e5; display: flex; flex: none; }
  .tab { border-right: 1px solid #c8c8c8; display: flex; flex: none; line-height: 29px; color: #666; }
  .sheettab { padding-left: 5px; }
  .sheettab.first { padding-left: 6px; }
  .active { background: #fafafa; color: #333; font-weight: 600; margin-top: -1px; }
  .status { height: 20px; background: #eaeaea; display: flex; padding-left: 3px; font-size: 11px; line-height: 20px; }
  .two { margin-left: 16px; }
  .three { margin-left: 17px; }
  .cells { margin-left: auto; display: flex; }
  .cells p { margin: 0; width: 27px; border-right: 1px solid #d0d0d0; }
  .cells .nav { width: 71px; }
  .cells p:first-child { border-left: 1px solid #d0d0d0; width: 28px; }
  .cells p:nth-child(3) { width: 47px; }

  footer { height: 40px; background: #02030a; display: flex; color: #fff; }
  footer > svg, .tray svg { height: 40px; }
  .tray { margin-left: auto; display: flex; line-height: 39px; }
  .clock { width: 88px; padding-right: 6px; display: flex; flex-direction: column; align-items: center; line-height: 18px; padding-top: 2px; font-size: 11.500px; }
</style>
